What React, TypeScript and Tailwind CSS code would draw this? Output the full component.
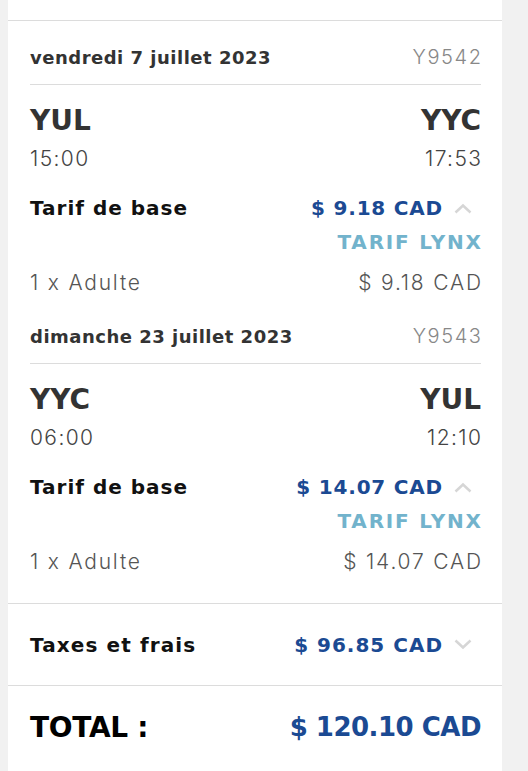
import React from 'react';

type Flight = {
  date: string;
  code: string;
  from: string;
  to: string;
  dep: string;
  arr: string;
  fare: string;
};

const flights: Flight[] = [
  { date: 'vendredi 7 juillet 2023', code: 'Y9542', from: 'YUL', to: 'YYC', dep: '15:00', arr: '17:53', fare: '$ 9.18 CAD' },
  { date: 'dimanche 23 juillet 2023', code: 'Y9543', from: 'YYC', to: 'YUL', dep: '06:00', arr: '12:10', fare: '$ 14.07 CAD' },
];

// bold text uses DejaVu (wide), thin text uses Inter light
const bold = { fontFamily: '"DejaVu Sans", sans-serif' };
const light = { fontFamily: 'Inter, "Open Sans", sans-serif' };

const Chevron: React.FC<{ up?: boolean }> = ({ up }) => (
  <svg width="18" height="11" viewBox="0 0 18 11" className="ml-[11px] mr-[9px]">
    <path
      d={up ? 'M1.5 9.5 L9 2.5 L16.5 9.5' : 'M1.5 1.5 L9 8.5 L16.5 1.5'}
      fill="none"
      stroke="#d6d6d6"
      strokeWidth="2.5"
    />
  </svg>
);

const FlightBlock: React.FC<{ f: Flight }> = ({ f }) => (
  <div className="pl-[22px] pr-[21px]">
    <div className="flex items-center justify-between h-[61px] pt-[8px] pb-[2px] border-b border-[#dcdcdc]">
      <span style={bold} className="text-[18px] font-bold tracking-[0.5px] text-[#333]">{f.date}</span>
      <span style={light} className="text-[20px] font-light tracking-[1.6px] text-[#888] -mr-[1.6px]">{f.code}</span>
    </div>
    <div style={bold} className="flex justify-between items-center h-[36px] mt-[18px] text-[28px] font-bold text-[#333]">
      <span>{f.from}</span>
      <span>{f.to}</span>
    </div>
    <div style={light} className="flex justify-between items-center h-[40px] text-[21px] font-light tracking-[1.4px] text-[#444]">
      <span>{f.dep}</span>
      <span className="-mr-[1.4px]">{f.arr}</span>
    </div>
    <div style={bold} className="flex justify-between items-center h-[34px] mt-[12px]">
      <span className="text-[20px] font-bold tracking-[1px] text-[#111]">Tarif de base</span>
      <span className="flex items-center text-[20px] font-bold tracking-[0.8px] text-[#1b4a93]">
        {f.fare}
        <Chevron up />
      </span>
    </div>
    <div style={bold} className="flex justify-end items-center h-[34px] text-[20px] font-bold tracking-[1.8px] text-[#72b3cc]">
      <span className="-mr-[1.8px]">TARIF LYNX</span>
    </div>
    <div style={light} className="flex justify-between items-center h-[40px] mt-[4px] text-[21px] font-light tracking-[1.8px] text-[#555]">
      <span>1 x Adulte</span>
      <span className="-mr-[1.8px]">{f.fare}</span>
    </div>
  </div>
);

export default function App() {
  return (
    <div className="min-h-screen bg-[#f1f1f1] pl-[8px] pr-[26px]">
      <div className="bg-white min-h-[771px]">
        <div className="h-[21px] border-b border-[#dcdcdc]" />
        <div className="pt-[3px]">
          {flights.map((f) => (
            <FlightBlock key={f.code} f={f} />
          ))}
        </div>
        <div
          style={bold}
          className="border-t border-[#dcdcdc] mt-[21px] h-[82px] flex items-center justify-between pl-[22px] pr-[21px]"
        >
          <span className="text-[20px] font-bold tracking-[1.1px] text-[#111]">Taxes et frais</span>
          <span className="flex items-center text-[20px] font-bold tracking-[1px] text-[#1b4a93]">
            $ 96.85 CAD
            <Chevron />
          </span>
        </div>
        <div
          style={bold}
          className="border-t border-[#dcdcdc] h-[84px] flex items-center justify-between pl-[22px] pr-[21px]"
        >
          <span className="text-[28px] font-bold tracking-[-0.3px] text-black">TOTAL :</span>
          <span className="text-[26px] font-bold tracking-[-0.5px] text-[#1b4a93]">$ 120.10 CAD</span>
        </div>
      </div>
    </div>
  );
}
